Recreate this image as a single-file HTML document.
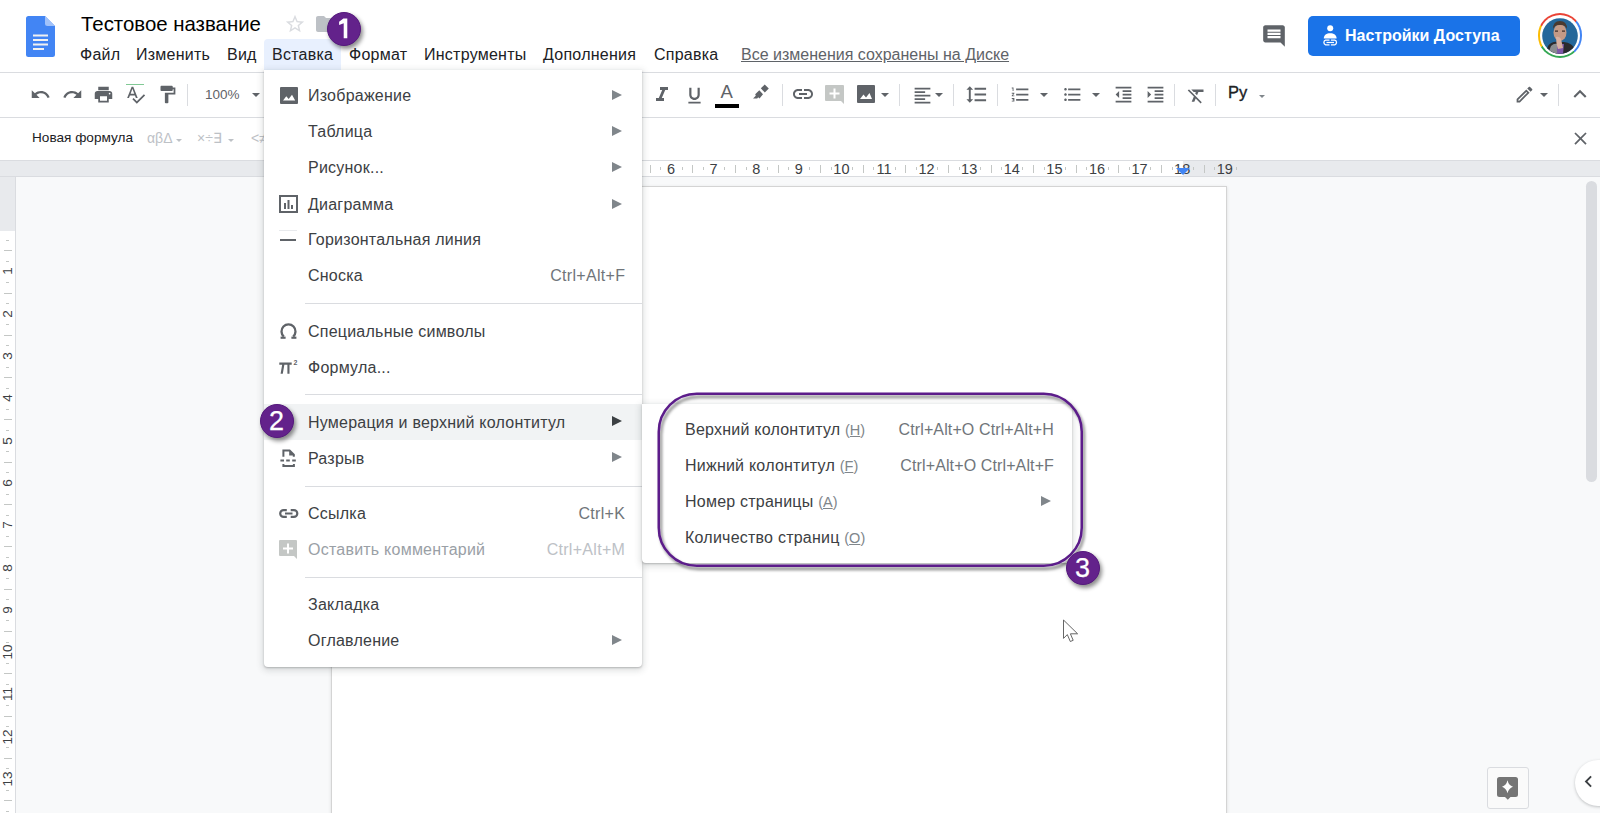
<!DOCTYPE html>
<html><head><meta charset="utf-8">
<style>
*{margin:0;padding:0;box-sizing:border-box}
html,body{width:1600px;height:813px;overflow:hidden;background:#fff;font-family:"Liberation Sans",sans-serif;color:#202124}
.a{position:absolute}
.t{position:absolute;white-space:nowrap;line-height:1}
svg{position:absolute;display:block}
.ic{fill:#5f6368}
.mb{font-size:16px;color:#202124;letter-spacing:0.25px}
.sep{position:absolute;width:1px;background:#dadce0;top:84px;height:22px}
.dd{position:absolute;width:0;height:0;border-left:4px solid transparent;border-right:4px solid transparent;border-top:4px solid #444746}
.mi{position:absolute;left:308px;font-size:16px;letter-spacing:0.23px;color:#3c4043;white-space:nowrap;line-height:1}
.sc{position:absolute;right:0;font-size:16px;letter-spacing:0.3px;color:#70757a;white-space:nowrap;line-height:1}
.arr{position:absolute;left:612px;width:0;height:0;border-top:5px solid transparent;border-bottom:5px solid transparent;border-left:10.5px solid #80868b}
.hr{position:absolute;left:305px;width:337px;height:1px;background:#dadce0}
.badge{position:absolute;border-radius:50%;background:#63228b;border:1.5px solid #55187d;box-shadow:2px 3px 4px rgba(0,0,0,.45);color:#fff;text-align:center;font-size:24px}
</style></head><body>
<!-- header -->
<div class="a" style="left:0;top:72px;width:1600px;height:1px;background:#dadce0"></div>
<!-- docs logo -->
<svg style="left:26px;top:16px" width="29" height="41" viewBox="0 0 29 41">
<path d="M2.5 0H19l10 10v28.5A2.5 2.5 0 0 1 26.5 41h-24A2.5 2.5 0 0 1 0 38.5v-36A2.5 2.5 0 0 1 2.5 0z" fill="#4285f4"/>
<path d="M19 0l10 10H21.5A2.5 2.5 0 0 1 19 7.5z" fill="#a1c2fa"/>
<path d="M19 10h10v-0l-10-0z" fill="#3367d6"/>
<rect x="7" y="18.5" width="15" height="2" fill="#f1f1f1"/>
<rect x="7" y="23" width="15" height="2" fill="#f1f1f1"/>
<rect x="7" y="27.5" width="15" height="2" fill="#f1f1f1"/>
<rect x="7" y="32" width="11" height="2" fill="#f1f1f1"/>
</svg>
<div class="t" style="left:81px;top:14px;font-size:20.4px;color:#000">Тестовое название</div>
<!-- star -->
<svg style="left:284px;top:13px" width="22" height="22" viewBox="0 0 24 24"><path fill="#dadce0" d="M22 9.24l-7.19-.62L12 2 9.19 8.63 2 9.24l5.46 4.73L5.82 21 12 17.27 18.18 21l-1.63-7.03L22 9.24zM12 15.4l-3.76 2.27 1-4.28-3.32-2.88 4.38-.38L12 6.1l1.71 4.04 4.38.38-3.32 2.88 1 4.28L12 15.4z"/></svg>
<!-- folder -->
<svg style="left:314px;top:12px" width="24" height="24" viewBox="0 0 24 24"><path fill="#bdc1c6" d="M10 4H4c-1.1 0-1.99.9-1.99 2L2 18c0 1.1.9 2 2 2h16c1.1 0 2-.9 2-2V8c0-1.1-.9-2-2-2h-8l-2-2z"/></svg>

<!-- menubar -->
<div class="a" style="left:264px;top:39px;width:77px;height:31px;background:#e8f0fe;border-radius:4px 4px 0 0"></div>
<div class="t mb" style="top:47px;left:80px">Файл</div>
<div class="t mb" style="top:47px;left:136px">Изменить</div>
<div class="t mb" style="top:47px;left:227px">Вид</div>
<div class="t mb" style="top:47px;left:272px">Вставка</div>
<div class="t mb" style="top:47px;left:349px">Формат</div>
<div class="t mb" style="top:47px;left:424px">Инструменты</div>
<div class="t mb" style="top:47px;left:543px">Дополнения</div>
<div class="t mb" style="top:47px;left:654px">Справка</div>
<div class="t mb" style="top:47px;left:741px;color:#5f6368;letter-spacing:0;text-decoration:underline">Все изменения сохранены на Диске</div>

<!-- comment icon -->
<svg style="left:1261px;top:23px" width="26" height="26" viewBox="0 0 24 24"><path fill="#5f6368" d="M21.99 4c0-1.1-.89-2-1.99-2H4c-1.1 0-2 .9-2 2v12c0 1.1.9 2 2 2h14l4 4-.01-18zM18 14H6v-2h12v2zm0-3H6V9h12v2zm0-3H6V6h12v2z"/></svg>
<!-- share button -->
<div class="a" style="left:1308px;top:16px;width:212px;height:40px;background:#1a73e8;border-radius:5px"></div>
<div class="t" style="left:1345px;top:28px;font-size:16px;font-weight:bold;color:#fff">Настройки Доступа</div>
<svg style="left:1315px;top:18px" width="30" height="32" viewBox="1315 18 30 32"><circle cx="1330.2" cy="28.3" r="3" fill="#fff"/><path d="M1323.8 38.5c0-3.6 2.8-5.3 6.4-5.3s6.4 1.7 6.4 5.3z" fill="#fff"/><path d="M1329.5 40.2h-3.9a2.4 2.4 0 0 0 0 4.6h3.9M1330.9 40.2h3.9a2.4 2.4 0 0 1 0 4.6h-3.9" fill="none" stroke="#fff" stroke-width="1.3"/><rect x="1326.5" y="41.9" width="7.5" height="1.2" fill="#fff"/></svg>
<!-- avatar -->
<div class="a" style="left:1537.6px;top:13.2px;width:44.8px;height:44.8px;border-radius:50%;background:conic-gradient(from -62deg,#ea4335 0deg 110deg,#4285f4 110deg 200deg,#34a853 200deg 300deg,#fbbc04 300deg 360deg)"></div>
<div class="a" style="left:1539.6px;top:15.2px;width:40.8px;height:40.8px;border-radius:50%;background:#fff"></div>
<svg style="left:1542px;top:17.5px" width="36" height="36" viewBox="0 0 36 36"><defs><clipPath id="cc"><circle cx="18" cy="18" r="17.8"/></clipPath></defs><g clip-path="url(#cc)">
<rect width="36" height="36" fill="#24679a"/>
<path d="M3 36 L6 28 Q10 23 16 24 L22 24 Q30 25 33 31 L34 36z" fill="#2b2b2e"/>
<path d="M6 36 L9 28 Q12 25 15 26 L16 36z" fill="#8a8d90"/>
<path d="M15 26 L22 26 L21 36 L15 36z" fill="#7d5aa8"/>
<ellipse cx="18" cy="14.5" rx="6.5" ry="8.5" fill="#c49a86"/>
<path d="M11 11 Q11 3 18 3 Q25 3 25 11 Q23 6.5 18 7 Q13 6.5 11 11z" fill="#4a3a30"/>
<path d="M14 19 Q17 18 19 21 L21 30 L16 31 Q14 26 14 19z" fill="#d8b0a0"/>
<rect x="13" y="12.5" width="3" height="1.2" fill="#3a2a25"/><rect x="20" y="12.5" width="3" height="1.2" fill="#3a2a25"/>
</g></svg>
<!-- toolbar -->
<div class="a" style="left:0;top:117px;width:1600px;height:1px;background:#dadce0"></div>
<svg style="left:29.5px;top:83.5px" width="21" height="21" viewBox="0 0 24 24"><path class="ic" d="M12.5 8c-2.65 0-5.05.99-6.9 2.6L2 7v9h9l-3.62-3.62c1.39-1.16 3.16-1.88 5.12-1.88 3.540 0 6.55 2.31 7.6 5.5l2.37-.78C21.080 11.03 17.15 8 12.5 8z"/></svg>
<svg style="left:61.5px;top:83.5px" width="21" height="21" viewBox="0 0 24 24"><path class="ic" d="M18.4 10.6C16.55 8.99 14.15 8 11.5 8c-4.65 0-8.58 3.03-9.96 7.22L3.9 16c1.05-3.19 4.05-5.5 7.6-5.5 1.95 0 3.73.72 5.12 1.88L13 16h9V7l-3.6 3.6z"/></svg>
<svg style="left:92.5px;top:83.5px" width="21" height="21" viewBox="0 0 24 24"><path class="ic" d="M19 8H5c-1.66 0-3 1.340-3 3v6h4v4h12v-4h4v-6c0-1.66-1.34-3-3-3zm-3 11H8v-5h8v5zm3-7c-.55 0-1-.45-1-1s.45-1 1-1 1 .45 1 1-.45 1-1 1zm-1-9H6v4h12V3z"/></svg>
<svg style="left:124.5px;top:83.5px" width="21" height="21" viewBox="0 0 24 24"><path class="ic" d="M12.45 16h2.09L9.43 3H7.57L2.46 16h2.09l1.12-3h5.64l1.14 3zm-6.02-5L8.5 5.48 10.57 11H6.43zm15.16.59l-8.09 8.09L9.83 16l-1.41 1.41 5.09 5.09L23 13l-1.41-1.41z"/></svg>
<div class="a" style="left:126px;top:84px;width:18px;height:1px;background:#81c995"></div>
<svg style="left:156.5px;top:83.5px" width="21" height="21" viewBox="0 0 24 24"><path class="ic" d="M18 4V3c0-.55-.45-1-1-1H5c-.55 0-1 .45-1 1v4c0 .55.45 1 1 1h12c.55 0 1-.45 1-1V6h1v4H9v11c0 .55.45 1 1 1h2c.55 0 1-.45 1-1v-9h8V4h-3z"/></svg>
<div class="sep" style="left:187px"></div>
<div class="t" style="left:205px;top:87.5px;font-size:13.5px;color:#5f6368">100%</div>
<div class="dd" style="border-top-color:#5f6368;left:252px;top:93px"></div>

<svg style="left:650.0px;top:83.0px" width="24" height="24" viewBox="0 0 24 24"><path class="ic" d="M10 4v3h2.21l-3.42 8H6v3h8v-3h-2.21l3.42-8H18V4z"/></svg>
<svg style="left:683.5px;top:84.5px" width="21" height="21" viewBox="0 0 24 24"><path class="ic" d="M12 17c3.31 0 6-2.69 6-6V3h-2.5v8c0 1.93-1.57 3.5-3.5 3.5S8.5 12.93 8.5 11V3H6v8c0 3.31 2.69 6 6 6zm-7 2v2h14v-2H5z"/></svg>
<div class="t" style="left:720.5px;top:83px;font-size:18.5px;color:#5f6368">A</div>
<div class="a" style="left:715px;top:104px;width:24px;height:4px;background:#000"></div>
<svg style="left:745px;top:80px" width="30" height="25" viewBox="745 80 30 25"><path fill="#5f6368" d="M764.7 84.6L768.8 88.5L764.8 92.6L760.8 88.3z M759.3 90.2L763 94.3L759.5 98.5L758.2 97.2L757.2 98.6L753 98.6L755.8 95.8L755.2 94.15z"/></svg>
<div class="sep" style="left:782px"></div>
<svg style="left:791.0px;top:82.0px" width="24" height="24" viewBox="0 0 24 24"><path class="ic" d="M3.9 12c0-1.71 1.39-3.1 3.1-3.1h4V7H7c-2.76 0-5 2.24-5 5s2.24 5 5 5h4v-1.9H7c-1.71 0-3.1-1.39-3.1-3.1zM8 13h8v-2H8v2zm9-6h-4v1.9h4c1.71 0 3.1 1.39 3.1 3.1s-1.39 3.1-3.1 3.1h-4V17h4c2.76 0 5-2.24 5-5s-2.24-5-5-5z"/></svg>
<svg style="left:825px;top:85px" width="19" height="19" viewBox="0 0 19 19"><path fill="#c4c7c5" d="M1 0h17a1 1 0 0 1 1 1v18l-3-3H1a1 1 0 0 1-1-1V1a1 1 0 0 1 1-1z"/><path fill="#fff" d="M8.5 3.5h2v4h4v2h-4v4h-2v-4h-4v-2h4z"/></svg>
<svg style="left:857px;top:85px" width="18" height="18" viewBox="0 0 18 18"><rect width="18" height="18" rx="1" fill="#5f6368"/><path fill="#fff" d="M3 14l3.5-4.5 2.5 3 3.5-4.5 2.5 6z"/></svg>
<div class="dd" style="border-top-color:#5f6368;left:881px;top:93px"></div>
<div class="sep" style="left:899px"></div>
<svg style="left:911.5px;top:84.5px" width="21" height="21" viewBox="0 0 24 24"><path class="ic" d="M15 15H3v2h12v-2zm0-8H3v2h12V7zM3 13h18v-2H3v2zm0 8h18v-2H3v2zM3 3v2h18V3H3z"/></svg>
<div class="dd" style="border-top-color:#5f6368;left:935px;top:93px"></div>
<div class="sep" style="left:953px"></div>
<svg style="left:964.5px;top:82.5px" width="23" height="23" viewBox="0 0 24 24"><path class="ic" d="M6 7h2.5L5 3.5 1.5 7H4v10H1.5L5 20.5 8.5 17H6V7zm4-2v2h12V5H10zm0 14h12v-2H10v2zm0-6h12v-2H10v2z"/></svg>
<div class="sep" style="left:997px"></div>
<svg style="left:1009.5px;top:83.5px" width="21" height="21" viewBox="0 0 24 24"><path class="ic" d="M2 17h2v.5H3v1h1v.5H2v1h3v-4H2v1zm1-9h1V4H2v1h1v3zm-1 3h1.8L2 13.1v.9h3v-1H3.2L5 10.9V10H2v1zm5-6v2h14V5H7zm0 14h14v-2H7v2zm0-6h14v-2H7v2z"/></svg>
<div class="dd" style="border-top-color:#5f6368;left:1040px;top:93px"></div>
<svg style="left:1061.5px;top:83.5px" width="21" height="21" viewBox="0 0 24 24"><path class="ic" d="M4 10.5c-.83 0-1.5.67-1.5 1.5s.67 1.5 1.5 1.5 1.5-.67 1.5-1.5-.67-1.5-1.5-1.5zm0-6c-.83 0-1.5.67-1.5 1.5S3.17 7.5 4 7.5 5.5 6.83 5.5 6 4.83 4.5 4 4.5zm0 12c-.83 0-1.5.68-1.5 1.5s.68 1.5 1.5 1.5 1.5-.68 1.5-1.5-.67-1.5-1.5-1.5zM7 19h14v-2H7v2zm0-6h14v-2H7v2zm0-8v2h14V5H7z"/></svg>
<div class="dd" style="border-top-color:#5f6368;left:1092px;top:93px"></div>
<svg style="left:1112.5px;top:83.5px" width="21" height="21" viewBox="0 0 24 24"><path class="ic" d="M11 17h10v-2H11v2zm-8-5l4 4V8l-4 4zm0 9h18v-2H3v2zM3 3v2h18V3H3zm8 6h10V7H11v2zm0 4h10v-2H11v2z"/></svg>
<svg style="left:1144.5px;top:83.5px" width="21" height="21" viewBox="0 0 24 24"><path class="ic" d="M3 21h18v-2H3v2zM3 8v8l4-4-4-4zm8 9h10v-2H11v2zM3 3v2h18V3H3zm8 6h10V7H11v2zm0 4h10v-2H11v2z"/></svg>
<div class="sep" style="left:1174px"></div>
<svg style="left:1185.5px;top:84.5px" width="21" height="21" viewBox="0 0 24 24"><path class="ic" d="M3.27 5L2 6.27l6.97 6.97L6.5 19h3l1.57-3.66L16.73 21 18 19.73 3.55 5.27 3.27 5zM6 5v.18L8.82 8h2.4l-.72 1.68 2.1 2.1L14.21 8H20V5H6z"/></svg>
<div class="sep" style="left:1215px"></div>
<div class="t" style="left:1228px;top:84px;font-size:16.5px;color:#202124;-webkit-text-stroke:0.35px #202124">Ру</div>
<div class="dd" style="border-top-color:#5f6368;left:1259px;top:95px;border-width:3px 3px 0 3px;border-top-color:#80868b"></div>
<svg style="left:1513.5px;top:83.5px" width="21" height="21" viewBox="0 0 24 24"><path class="ic" d="M3 17.25V21h3.75L17.81 9.94l-3.75-3.75L3 17.25zM5.92 19H5v-.92l9.06-9.06.92.92L5.92 19zM20.71 5.63l-2.34-2.34c-.2-.2-.45-.29-.71-.29s-.51.1-.7.29l-1.83 1.83 3.75 3.75 1.83-1.83c.39-.39.39-1.02 0-1.41z"/></svg>
<div class="dd" style="border-top-color:#5f6368;left:1540px;top:93px"></div>
<div class="sep" style="left:1558px"></div>
<svg style="left:1567.0px;top:81.0px" width="26" height="26" viewBox="0 0 24 24"><path class="ic" d="M12 8l-6 6 1.41 1.41L12 10.83l4.59 4.58L18 14z"/></svg>


<!-- doc area -->
<div class="a" style="left:0;top:160px;width:1600px;height:653px;background:#f8f9fa"></div>
<div class="a" style="left:0;top:160px;width:1600px;height:17px;background:#e8eaed;border-top:1px solid #dadce0;border-bottom:1px solid #dadce0"></div>
<div class="a" style="left:415px;top:161px;width:768px;height:15px;background:#fff"></div>
<div class="a" style="left:426.0px;top:167px;width:1px;height:3px;background:#c4c7c5"></div><div class="a" style="left:436.7px;top:164.5px;width:1px;height:8px;background:#c4c7c5"></div><div class="t" style="left:458.0px;top:161.5px;font-size:14.5px;color:#3c4043;width:20px;margin-left:-10px;text-align:center">1</div><div class="a" style="left:447.4px;top:167px;width:1px;height:3px;background:#c4c7c5"></div><div class="a" style="left:468.6px;top:167px;width:1px;height:3px;background:#c4c7c5"></div><div class="a" style="left:479.3px;top:164.5px;width:1px;height:8px;background:#c4c7c5"></div><div class="t" style="left:500.6px;top:161.5px;font-size:14.5px;color:#3c4043;width:20px;margin-left:-10px;text-align:center">2</div><div class="a" style="left:489.9px;top:167px;width:1px;height:3px;background:#c4c7c5"></div><div class="a" style="left:511.2px;top:167px;width:1px;height:3px;background:#c4c7c5"></div><div class="a" style="left:521.9px;top:164.5px;width:1px;height:8px;background:#c4c7c5"></div><div class="t" style="left:543.2px;top:161.5px;font-size:14.5px;color:#3c4043;width:20px;margin-left:-10px;text-align:center">3</div><div class="a" style="left:532.6px;top:167px;width:1px;height:3px;background:#c4c7c5"></div><div class="a" style="left:553.9px;top:167px;width:1px;height:3px;background:#c4c7c5"></div><div class="a" style="left:564.5px;top:164.5px;width:1px;height:8px;background:#c4c7c5"></div><div class="t" style="left:585.8px;top:161.5px;font-size:14.5px;color:#3c4043;width:20px;margin-left:-10px;text-align:center">4</div><div class="a" style="left:575.1px;top:167px;width:1px;height:3px;background:#c4c7c5"></div><div class="a" style="left:596.4px;top:167px;width:1px;height:3px;background:#c4c7c5"></div><div class="a" style="left:607.1px;top:164.5px;width:1px;height:8px;background:#c4c7c5"></div><div class="t" style="left:628.4px;top:161.5px;font-size:14.5px;color:#3c4043;width:20px;margin-left:-10px;text-align:center">5</div><div class="a" style="left:617.8px;top:167px;width:1px;height:3px;background:#c4c7c5"></div><div class="a" style="left:639.0px;top:167px;width:1px;height:3px;background:#c4c7c5"></div><div class="a" style="left:649.7px;top:164.5px;width:1px;height:8px;background:#c4c7c5"></div><div class="t" style="left:671.0px;top:161.5px;font-size:14.5px;color:#3c4043;width:20px;margin-left:-10px;text-align:center">6</div><div class="a" style="left:660.4px;top:167px;width:1px;height:3px;background:#c4c7c5"></div><div class="a" style="left:681.6px;top:167px;width:1px;height:3px;background:#c4c7c5"></div><div class="a" style="left:692.3px;top:164.5px;width:1px;height:8px;background:#c4c7c5"></div><div class="t" style="left:713.6px;top:161.5px;font-size:14.5px;color:#3c4043;width:20px;margin-left:-10px;text-align:center">7</div><div class="a" style="left:702.9px;top:167px;width:1px;height:3px;background:#c4c7c5"></div><div class="a" style="left:724.2px;top:167px;width:1px;height:3px;background:#c4c7c5"></div><div class="a" style="left:734.9px;top:164.5px;width:1px;height:8px;background:#c4c7c5"></div><div class="t" style="left:756.2px;top:161.5px;font-size:14.5px;color:#3c4043;width:20px;margin-left:-10px;text-align:center">8</div><div class="a" style="left:745.6px;top:167px;width:1px;height:3px;background:#c4c7c5"></div><div class="a" style="left:766.9px;top:167px;width:1px;height:3px;background:#c4c7c5"></div><div class="a" style="left:777.5px;top:164.5px;width:1px;height:8px;background:#c4c7c5"></div><div class="t" style="left:798.8px;top:161.5px;font-size:14.5px;color:#3c4043;width:20px;margin-left:-10px;text-align:center">9</div><div class="a" style="left:788.1px;top:167px;width:1px;height:3px;background:#c4c7c5"></div><div class="a" style="left:809.4px;top:167px;width:1px;height:3px;background:#c4c7c5"></div><div class="a" style="left:820.1px;top:164.5px;width:1px;height:8px;background:#c4c7c5"></div><div class="t" style="left:841.4px;top:161.5px;font-size:14.5px;color:#3c4043;width:20px;margin-left:-10px;text-align:center">10</div><div class="a" style="left:830.8px;top:167px;width:1px;height:3px;background:#c4c7c5"></div><div class="a" style="left:852.0px;top:167px;width:1px;height:3px;background:#c4c7c5"></div><div class="a" style="left:862.7px;top:164.5px;width:1px;height:8px;background:#c4c7c5"></div><div class="t" style="left:884.0px;top:161.5px;font-size:14.5px;color:#3c4043;width:20px;margin-left:-10px;text-align:center">11</div><div class="a" style="left:873.4px;top:167px;width:1px;height:3px;background:#c4c7c5"></div><div class="a" style="left:894.6px;top:167px;width:1px;height:3px;background:#c4c7c5"></div><div class="a" style="left:905.3px;top:164.5px;width:1px;height:8px;background:#c4c7c5"></div><div class="t" style="left:926.6px;top:161.5px;font-size:14.5px;color:#3c4043;width:20px;margin-left:-10px;text-align:center">12</div><div class="a" style="left:916.0px;top:167px;width:1px;height:3px;background:#c4c7c5"></div><div class="a" style="left:937.2px;top:167px;width:1px;height:3px;background:#c4c7c5"></div><div class="a" style="left:947.9px;top:164.5px;width:1px;height:8px;background:#c4c7c5"></div><div class="t" style="left:969.2px;top:161.5px;font-size:14.5px;color:#3c4043;width:20px;margin-left:-10px;text-align:center">13</div><div class="a" style="left:958.6px;top:167px;width:1px;height:3px;background:#c4c7c5"></div><div class="a" style="left:979.9px;top:167px;width:1px;height:3px;background:#c4c7c5"></div><div class="a" style="left:990.5px;top:164.5px;width:1px;height:8px;background:#c4c7c5"></div><div class="t" style="left:1011.8px;top:161.5px;font-size:14.5px;color:#3c4043;width:20px;margin-left:-10px;text-align:center">14</div><div class="a" style="left:1001.1px;top:167px;width:1px;height:3px;background:#c4c7c5"></div><div class="a" style="left:1022.4px;top:167px;width:1px;height:3px;background:#c4c7c5"></div><div class="a" style="left:1033.1px;top:164.5px;width:1px;height:8px;background:#c4c7c5"></div><div class="t" style="left:1054.4px;top:161.5px;font-size:14.5px;color:#3c4043;width:20px;margin-left:-10px;text-align:center">15</div><div class="a" style="left:1043.8px;top:167px;width:1px;height:3px;background:#c4c7c5"></div><div class="a" style="left:1065.1px;top:167px;width:1px;height:3px;background:#c4c7c5"></div><div class="a" style="left:1075.7px;top:164.5px;width:1px;height:8px;background:#c4c7c5"></div><div class="t" style="left:1097.0px;top:161.5px;font-size:14.5px;color:#3c4043;width:20px;margin-left:-10px;text-align:center">16</div><div class="a" style="left:1086.3px;top:167px;width:1px;height:3px;background:#c4c7c5"></div><div class="a" style="left:1107.7px;top:167px;width:1px;height:3px;background:#c4c7c5"></div><div class="a" style="left:1118.3px;top:164.5px;width:1px;height:8px;background:#c4c7c5"></div><div class="t" style="left:1139.6px;top:161.5px;font-size:14.5px;color:#3c4043;width:20px;margin-left:-10px;text-align:center">17</div><div class="a" style="left:1128.9px;top:167px;width:1px;height:3px;background:#c4c7c5"></div><div class="a" style="left:1150.2px;top:167px;width:1px;height:3px;background:#c4c7c5"></div><div class="a" style="left:1160.9px;top:164.5px;width:1px;height:8px;background:#c4c7c5"></div><div class="t" style="left:1182.2px;top:161.5px;font-size:14.5px;color:#3c4043;width:20px;margin-left:-10px;text-align:center">18</div><div class="a" style="left:1171.5px;top:167px;width:1px;height:3px;background:#c4c7c5"></div><div class="a" style="left:1192.9px;top:167px;width:1px;height:3px;background:#c4c7c5"></div><div class="a" style="left:1203.5px;top:164.5px;width:1px;height:8px;background:#c4c7c5"></div><div class="t" style="left:1224.8px;top:161.5px;font-size:14.5px;color:#3c4043;width:20px;margin-left:-10px;text-align:center">19</div><div class="a" style="left:1214.1px;top:167px;width:1px;height:3px;background:#c4c7c5"></div><div class="a" style="left:1235.5px;top:167px;width:1px;height:3px;background:#c4c7c5"></div>
<svg style="left:1176px;top:168px" width="14" height="8" viewBox="0 0 14 8"><path d="M0 0h14L7 7z" fill="#4285f4"/></svg>
<div class="a" style="left:0;top:177px;width:16px;height:636px;background:#fff;border-right:1px solid #dadce0"></div>
<div class="a" style="left:0;top:177px;width:15px;height:54px;background:#e8eaed"></div>
<div class="a" style="left:6px;top:239.7px;width:3px;height:1px;background:#c4c7c5"></div><div class="a" style="left:4px;top:250.2px;width:8px;height:1px;background:#c4c7c5"></div><div class="t" style="left:-1px;top:271.4px;width:15px;height:12px;font-size:13.5px;color:#3c4043;text-align:center;transform:rotate(-90deg);transform-origin:50% 50%;margin-top:-6px">1</div><div class="a" style="left:6px;top:260.8px;width:3px;height:1px;background:#c4c7c5"></div><div class="a" style="left:6px;top:282.0px;width:3px;height:1px;background:#c4c7c5"></div><div class="a" style="left:4px;top:292.5px;width:8px;height:1px;background:#c4c7c5"></div><div class="t" style="left:-1px;top:313.7px;width:15px;height:12px;font-size:13.5px;color:#3c4043;text-align:center;transform:rotate(-90deg);transform-origin:50% 50%;margin-top:-6px">2</div><div class="a" style="left:6px;top:303.1px;width:3px;height:1px;background:#c4c7c5"></div><div class="a" style="left:6px;top:324.3px;width:3px;height:1px;background:#c4c7c5"></div><div class="a" style="left:4px;top:334.8px;width:8px;height:1px;background:#c4c7c5"></div><div class="t" style="left:-1px;top:356.0px;width:15px;height:12px;font-size:13.5px;color:#3c4043;text-align:center;transform:rotate(-90deg);transform-origin:50% 50%;margin-top:-6px">3</div><div class="a" style="left:6px;top:345.4px;width:3px;height:1px;background:#c4c7c5"></div><div class="a" style="left:6px;top:366.6px;width:3px;height:1px;background:#c4c7c5"></div><div class="a" style="left:4px;top:377.1px;width:8px;height:1px;background:#c4c7c5"></div><div class="t" style="left:-1px;top:398.3px;width:15px;height:12px;font-size:13.5px;color:#3c4043;text-align:center;transform:rotate(-90deg);transform-origin:50% 50%;margin-top:-6px">4</div><div class="a" style="left:6px;top:387.7px;width:3px;height:1px;background:#c4c7c5"></div><div class="a" style="left:6px;top:408.9px;width:3px;height:1px;background:#c4c7c5"></div><div class="a" style="left:4px;top:419.4px;width:8px;height:1px;background:#c4c7c5"></div><div class="t" style="left:-1px;top:440.6px;width:15px;height:12px;font-size:13.5px;color:#3c4043;text-align:center;transform:rotate(-90deg);transform-origin:50% 50%;margin-top:-6px">5</div><div class="a" style="left:6px;top:430.0px;width:3px;height:1px;background:#c4c7c5"></div><div class="a" style="left:6px;top:451.2px;width:3px;height:1px;background:#c4c7c5"></div><div class="a" style="left:4px;top:461.8px;width:8px;height:1px;background:#c4c7c5"></div><div class="t" style="left:-1px;top:482.9px;width:15px;height:12px;font-size:13.5px;color:#3c4043;text-align:center;transform:rotate(-90deg);transform-origin:50% 50%;margin-top:-6px">6</div><div class="a" style="left:6px;top:472.3px;width:3px;height:1px;background:#c4c7c5"></div><div class="a" style="left:6px;top:493.5px;width:3px;height:1px;background:#c4c7c5"></div><div class="a" style="left:4px;top:504.0px;width:8px;height:1px;background:#c4c7c5"></div><div class="t" style="left:-1px;top:525.2px;width:15px;height:12px;font-size:13.5px;color:#3c4043;text-align:center;transform:rotate(-90deg);transform-origin:50% 50%;margin-top:-6px">7</div><div class="a" style="left:6px;top:514.6px;width:3px;height:1px;background:#c4c7c5"></div><div class="a" style="left:6px;top:535.8px;width:3px;height:1px;background:#c4c7c5"></div><div class="a" style="left:4px;top:546.3px;width:8px;height:1px;background:#c4c7c5"></div><div class="t" style="left:-1px;top:567.5px;width:15px;height:12px;font-size:13.5px;color:#3c4043;text-align:center;transform:rotate(-90deg);transform-origin:50% 50%;margin-top:-6px">8</div><div class="a" style="left:6px;top:556.9px;width:3px;height:1px;background:#c4c7c5"></div><div class="a" style="left:6px;top:578.1px;width:3px;height:1px;background:#c4c7c5"></div><div class="a" style="left:4px;top:588.6px;width:8px;height:1px;background:#c4c7c5"></div><div class="t" style="left:-1px;top:609.8px;width:15px;height:12px;font-size:13.5px;color:#3c4043;text-align:center;transform:rotate(-90deg);transform-origin:50% 50%;margin-top:-6px">9</div><div class="a" style="left:6px;top:599.2px;width:3px;height:1px;background:#c4c7c5"></div><div class="a" style="left:6px;top:620.4px;width:3px;height:1px;background:#c4c7c5"></div><div class="a" style="left:4px;top:630.9px;width:8px;height:1px;background:#c4c7c5"></div><div class="t" style="left:-1px;top:652.1px;width:15px;height:12px;font-size:13.5px;color:#3c4043;text-align:center;transform:rotate(-90deg);transform-origin:50% 50%;margin-top:-6px">10</div><div class="a" style="left:6px;top:641.5px;width:3px;height:1px;background:#c4c7c5"></div><div class="a" style="left:6px;top:662.7px;width:3px;height:1px;background:#c4c7c5"></div><div class="a" style="left:4px;top:673.2px;width:8px;height:1px;background:#c4c7c5"></div><div class="t" style="left:-1px;top:694.4px;width:15px;height:12px;font-size:13.5px;color:#3c4043;text-align:center;transform:rotate(-90deg);transform-origin:50% 50%;margin-top:-6px">11</div><div class="a" style="left:6px;top:683.8px;width:3px;height:1px;background:#c4c7c5"></div><div class="a" style="left:6px;top:705.0px;width:3px;height:1px;background:#c4c7c5"></div><div class="a" style="left:4px;top:715.5px;width:8px;height:1px;background:#c4c7c5"></div><div class="t" style="left:-1px;top:736.7px;width:15px;height:12px;font-size:13.5px;color:#3c4043;text-align:center;transform:rotate(-90deg);transform-origin:50% 50%;margin-top:-6px">12</div><div class="a" style="left:6px;top:726.1px;width:3px;height:1px;background:#c4c7c5"></div><div class="a" style="left:6px;top:747.3px;width:3px;height:1px;background:#c4c7c5"></div><div class="a" style="left:4px;top:757.8px;width:8px;height:1px;background:#c4c7c5"></div><div class="t" style="left:-1px;top:779.0px;width:15px;height:12px;font-size:13.5px;color:#3c4043;text-align:center;transform:rotate(-90deg);transform-origin:50% 50%;margin-top:-6px">13</div><div class="a" style="left:6px;top:768.4px;width:3px;height:1px;background:#c4c7c5"></div><div class="a" style="left:6px;top:789.6px;width:3px;height:1px;background:#c4c7c5"></div><div class="a" style="left:4px;top:800.1px;width:8px;height:1px;background:#c4c7c5"></div><div class="a" style="left:6px;top:810.7px;width:3px;height:1px;background:#c4c7c5"></div>

<div class="a" style="left:331px;top:186px;width:896px;height:640px;background:#fff;border:1px solid #d4d4d4;box-shadow:0 1px 3px rgba(60,64,67,.15)"></div>
<div class="a" style="left:1586px;top:181px;width:11px;height:301px;background:#dadce0;border-radius:6px"></div>
<!-- explore -->
<div class="a" style="left:1487px;top:767px;width:42px;height:42px;background:#fafafa;border:1px solid #dadce0;border-radius:3px"></div>
<svg style="left:1497px;top:777px" width="22" height="24" viewBox="0 0 22 24"><path d="M2.5 0h16A2.5 2.5 0 0 1 21 2.5v15a2.5 2.5 0 0 1-2.5 2.5h-5l-2.7 2.8-2.8-2.8h-5.5A2.5 2.5 0 0 1 0 17.5v-15A2.5 2.5 0 0 1 2.5 0z" fill="#757575"/><path d="M10.5 3.2Q11.6 8.2 16 9.7Q11.6 11.2 10.5 16.2Q9.4 11.2 5 9.7Q9.4 8.2 10.5 3.2z" fill="#fff"/></svg>
<div class="a" style="left:1575px;top:760px;width:50px;height:46px;background:#fff;border-radius:23px;box-shadow:0 1px 3px rgba(60,64,67,.3)"></div>
<svg style="left:1577px;top:770px" width="23" height="23" viewBox="0 0 24 24"><path fill="#3c4043" d="M15.41 7.41L14 6l-6 6 6 6 1.41-1.41L10.83 12z"/></svg>
<!-- cursor -->
<svg style="left:1062px;top:619px" width="18" height="25" viewBox="0 0 18 25"><path d="M1.5 1V19.4L5.3 15.6L8.3 22.5L11.2 21.3L8.4 14.8H15.6Z" fill="#fff" stroke="#555" stroke-width="0.9" stroke-linejoin="round"/></svg>
<!-- equation toolbar -->
<div class="t" style="left:32px;top:130.5px;font-size:13.6px;color:#202124">Новая формула</div>
<div class="t" style="left:147px;top:131px;font-size:14px;color:#bdc1c6">αβΔ</div>
<div class="dd" style="border-top-color:#5f6368;left:176px;top:139px;border-width:3px 3px 0 3px;border-top-color:#bdc1c6"></div>
<div class="t" style="left:197px;top:131px;font-size:14px;color:#bdc1c6">×÷∃</div>
<div class="dd" style="border-top-color:#5f6368;left:228px;top:139px;border-width:3px 3px 0 3px;border-top-color:#bdc1c6"></div>
<div class="t" style="left:251px;top:131px;font-size:14px;color:#bdc1c6">&lt;≠</div>
<svg style="left:1569.5px;top:127.5px" width="21" height="21" viewBox="0 0 24 24"><path class="ic" d="M19 6.41L17.59 5 12 10.59 6.41 5 5 6.41 10.59 12 5 17.59 6.41 19 12 13.41 17.59 19 19 17.59 13.41 12z"/></svg>
<!-- insert menu -->
<div class="a" style="left:264px;top:69.5px;width:378px;height:597.5px;background:#fff;border-radius:0 0 4px 4px;box-shadow:0 2px 6px 2px rgba(60,64,67,.15),0 1px 2px rgba(60,64,67,.3)"></div>
<div class="a" style="left:264px;top:404px;width:378px;height:36.2px;background:#f1f3f4"></div>
<div class="mi" style="top:88.0px;color:#3c4043">Изображение</div>
<div class="arr" style="top:89.7px;"></div>
<div class="mi" style="top:124.2px;color:#3c4043">Таблица</div>
<div class="arr" style="top:125.9px;"></div>
<div class="mi" style="top:160.3px;color:#3c4043">Рисунок...</div>
<div class="arr" style="top:162.0px;"></div>
<div class="mi" style="top:196.9px;color:#3c4043">Диаграмма</div>
<div class="arr" style="top:198.6px;"></div>
<div class="mi" style="top:232.4px;color:#3c4043">Горизонтальная линия</div>
<div class="mi" style="top:268.3px;color:#3c4043">Сноска</div>
<div class="sc" style="right:974.8px;top:268.3px;color:#70757a">Ctrl+Alt+F</div>
<div class="hr" style="top:302.6px"></div>
<div class="mi" style="top:323.6px;color:#3c4043">Специальные символы</div>
<div class="mi" style="top:359.5px;color:#3c4043">Формула...</div>
<div class="hr" style="top:393.8px"></div>
<div class="mi" style="top:414.5px;color:#3c4043">Нумерация и верхний колонтитул</div>
<div class="arr" style="top:416.2px;border-left-color:#3c4043"></div>
<div class="mi" style="top:450.7px;color:#3c4043">Разрыв</div>
<div class="arr" style="top:452.4px;"></div>
<div class="hr" style="top:485.8px"></div>
<div class="mi" style="top:505.9px;color:#3c4043">Ссылка</div>
<div class="sc" style="right:974.8px;top:505.9px;color:#70757a">Ctrl+K</div>
<div class="mi" style="top:541.9px;color:#9aa0a6">Оставить комментарий</div>
<div class="sc" style="right:974.8px;top:541.9px;color:#bdc1c6">Ctrl+Alt+M</div>
<div class="hr" style="top:576.5px"></div>
<div class="mi" style="top:596.9px;color:#3c4043">Закладка</div>
<div class="mi" style="top:632.8px;color:#3c4043">Оглавление</div>
<div class="arr" style="top:634.5px;"></div>

<!-- menu icons -->
<svg style="left:280px;top:87px" width="18" height="17" viewBox="0 0 18 17"><rect width="18" height="17" rx="1" fill="#5f6368"/><path fill="#fff" d="M3 13.5l3.3-4.3 2.4 2.9 3.3-4.3 3.2 5.7z"/></svg>
<svg style="left:279px;top:195px" width="19" height="18" viewBox="0 0 19 18"><path fill="#5f6368" d="M0 0h19v18H0zM2 2v14h15V2z"/><rect x="5" y="8" width="2" height="6" fill="#5f6368"/><rect x="8.5" y="5" width="2" height="9" fill="#5f6368"/><rect x="12" y="10" width="2" height="4" fill="#5f6368"/></svg>
<div class="a" style="left:279px;top:230px;width:18px;height:1px;background:#e8eaed"></div>
<div class="a" style="left:280px;top:238.5px;width:16px;height:2px;background:#5f6368"></div>
<svg style="left:279px;top:540px" width="18" height="19" viewBox="0 0 18 19"><path fill="#c4c7c5" d="M1 0h16a1 1 0 0 1 1 1v18l-3-3H1a1 1 0 0 1-1-1V1a1 1 0 0 1 1-1z"/><path fill="#fff" d="M8 3.5h2v4h4v2h-4v4H8v-4H4v-2h4z"/></svg>

<svg style="left:270px;top:315px" width="40" height="240" viewBox="270 315 40 240">
<path d="M283.8 336.6A7 7 0 1 1 293.2 336.6" fill="none" stroke="#5f6368" stroke-width="2.3"/>
<rect x="280.6" y="336.6" width="5" height="2.2" fill="#5f6368"/><rect x="291.4" y="336.6" width="5" height="2.2" fill="#5f6368"/>
<path d="M279.3 362.6H291.7V364.7H279.3z M282.2 364.6h2.2l-1.6 9.1h-2.2z M287.4 364.6h2.1v9.1h-2.1z" fill="#5f6368"/>
<text x="293.5" y="365" font-size="7" font-weight="bold" fill="#5f6368" font-family="Liberation Sans">2</text>
<path d="M283.4 456.8V450.4H289.6L293.8 454.6V456.8" fill="none" stroke="#5f6368" stroke-width="2"/>
<path d="M289.2 450.4L294.7 455.6H289.2z" fill="#5f6368"/>
<path d="M280.4 459.6h3.6v1.8h-3.6zM286.2 459.6h3.6v1.8h-3.6zM292.2 459.6h3.6v1.8h-3.6z" fill="#5f6368"/>
<path d="M283.4 464V466H293.9V464" fill="none" stroke="#5f6368" stroke-width="2"/>
<path d="M286.8 510.1H283.6A3.4 3.4 0 0 0 283.6 516.9H286.8 M290.7 510.1H293.9A3.4 3.4 0 0 1 293.9 516.9H290.7" fill="none" stroke="#5f6368" stroke-width="2.2"/>
<rect x="285" y="512.5" width="7.5" height="2" fill="#5f6368"/>
</svg>
<!-- submenu -->
<div class="a" style="left:642px;top:404px;width:430px;height:159px;background:#fff;border-radius:0 4px 4px 4px;box-shadow:0 2px 6px 2px rgba(60,64,67,.15),0 1px 2px rgba(60,64,67,.3)"></div>
<div class="t" style="left:685px;top:422px;font-size:16px;letter-spacing:0.23px;color:#3c4043">Верхний колонтитул <span style="color:#80868b;font-size:14.5px;letter-spacing:0">(<u>H</u>)</span></div>
<div class="t" style="left:685px;top:458px;font-size:16px;letter-spacing:0.23px;color:#3c4043">Нижний колонтитул <span style="color:#80868b;font-size:14.5px;letter-spacing:0">(<u>F</u>)</span></div>
<div class="t" style="left:685px;top:494px;font-size:16px;letter-spacing:0.23px;color:#3c4043">Номер страницы <span style="color:#80868b;font-size:14.5px;letter-spacing:0">(<u>A</u>)</span></div>
<div class="t" style="left:685px;top:530px;font-size:16px;letter-spacing:0.23px;color:#3c4043">Количество страниц <span style="color:#80868b;font-size:14.5px;letter-spacing:0">(<u>O</u>)</span></div>
<div class="t" style="right:546px;top:422px;font-size:16px;letter-spacing:0.12px;color:#70757a">Ctrl+Alt+O Ctrl+Alt+H</div>
<div class="t" style="right:546px;top:458px;font-size:16px;letter-spacing:0.12px;color:#70757a">Ctrl+Alt+O Ctrl+Alt+F</div>
<div class="arr" style="left:1041px;top:496px"></div>

<!-- annotation -->
<svg style="left:650px;top:386px" width="445" height="190" viewBox="0 0 445 190"><defs><filter id="sh" x="-10%" y="-10%" width="120%" height="130%"><feGaussianBlur in="SourceAlpha" stdDeviation="1.6"/><feOffset dx="1.5" dy="2.5"/><feComponentTransfer><feFuncA type="linear" slope="0.5"/></feComponentTransfer><feMerge><feMergeNode/><feMergeNode in="SourceGraphic"/></feMerge></filter></defs>
<rect x="8.75" y="7.75" width="423" height="172" rx="38" ry="38" fill="none" stroke="#5b1d8a" stroke-width="2.5" filter="url(#sh)"/></svg>

<!-- badges -->
<div class="badge" style="left:327px;top:12px;width:34px;height:34px"></div><svg style="left:327px;top:12px" width="34" height="34" viewBox="327 12 34 34"><path d="M343.7 18.6h3.6v19.6h-3.6V23.3l-4.6 1.6v-3.1l4.3-3.2z" fill="#fff"/></svg>
<div class="badge" style="left:260px;top:404px;width:34px;height:34px"><span class="t" style="left:0;top:3px;width:31px;text-align:center;font-size:27px;color:#fff;-webkit-text-stroke:0.25px #fff">2</span></div>
<div class="badge" style="left:1066px;top:551px;width:34px;height:34px"><span class="t" style="left:0;top:3px;width:31px;text-align:center;font-size:27px;color:#fff;-webkit-text-stroke:0.25px #fff">3</span></div>
</body></html>
